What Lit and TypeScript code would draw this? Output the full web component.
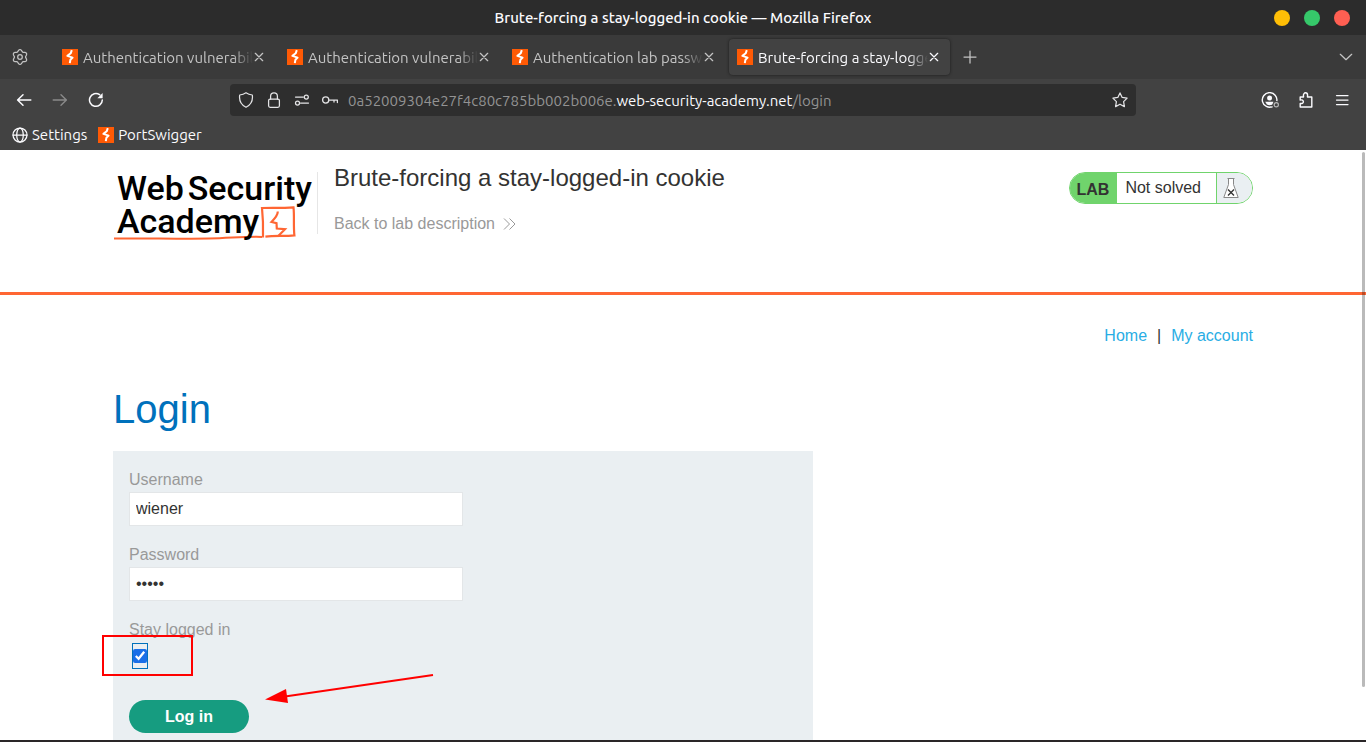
import { LitElement, html, svg, css } from "lit";
import { customElement, property, state } from "lit/decorators.js";
import { classMap } from "lit/directives/class-map.js";

const bolt = svg`
  <rect width="16" height="16" fill="#ff5a05"></rect>
  <path d="M9.800 1.200 8.700 4.300 5.400 6.900l5.200 1.700-2.200 2.200-.6 3.400" fill="none" stroke="#fff" stroke-width="2" stroke-linejoin="round"></path>`;

const favicon = () => html`<svg class="ico" width="16" height="16" viewBox="0 0 16 16" aria-hidden="true">${bolt}</svg>`;

// Six rounded teeth around a circle, one of them pointing up.
const gearOutline = Array.from({ length: 60 }, (_, i) => {
  const angle = (i / 60) * Math.PI * 2;
  const radius = 6.5 + Math.cos(angle * 6) * 0.95;
  return `${(8 + Math.sin(angle) * radius).toFixed(2)},${(8 - Math.cos(angle) * radius).toFixed(2)}`;
}).join(" ");

const line = (content: unknown, size = 16) => html`<svg
  class="ico" width=${size} height=${size} viewBox="0 0 16 16" fill="none" stroke="currentColor"
  stroke-width="1.25" stroke-linecap="round" stroke-linejoin="round" aria-hidden="true">${content}</svg>`;

const icons = {
  gear: svg`<polygon points=${gearOutline}></polygon><circle cx="8" cy="8" r="2.300"></circle>`,
  back: svg`<path d="M14.800 8H1.800M7 2.800 1.600 8 7 13.200" stroke-width="1.500"></path>`,
  forward: svg`<path d="M1.200 8h13M9 2.800 14.400 8 9 13.200" stroke-width="1.400"></path>`,
  reload: svg`<path d="M14.300 8A6.400 6.400 0 1 1 11.600 2.700" stroke-width="1.500"></path><path d="M14.600 1v5.200H9.400z" fill="currentColor" stroke="none"></path>`,
  shield: svg`<path d="M8 .8c1.800 1.300 3.800 2 6.300 2.200.7 5-1.500 10-6.300 12.300C3.200 13 1 8 1.700 3 4.200 2.800 6.200 2.100 8 .8z"></path>`,
  lock: svg`<rect x="2.600" y="7" width="10.800" height="8.300" rx="1.500"></rect><path d="M4.600 7V4.200a3.400 3.400 0 0 1 6.800 0V7"></path>`,
  perms: svg`<path d="M1.500 5h7.800M6.500 11h8"></path><circle cx="12.300" cy="5" r="2"></circle><circle cx="3.500" cy="11" r="2"></circle>`,
  key: svg`<circle cx="3.700" cy="8" r="3.100"></circle><path d="M6.800 8h8.600v2.600M12 8v2"></path>`,
  star: svg`<path d="m8 .9 2.200 4.500 4.900.7-3.500 3.500.8 5L8 12.200l-4.400 2.400.8-5L.9 6.100l4.900-.7z"></path>`,
  globe: svg`<circle cx="8" cy="8" r="7"></circle><ellipse cx="8" cy="8" rx="3.300" ry="7"></ellipse><path d="M1 8h14"></path>`,
  plus: svg`<path d="M8 2v12M2 8h12"></path>`,
  chevron: svg`<path d="m2.300 5.300 5.700 5.400 5.700-5.400"></path>`,
  cross: svg`<path d="m4.300 4.300 7.400 7.400M11.700 4.300l-7.400 7.400"></path>`,
  puzzle: svg`<path d="M2.200 5h3.300c.3-.3-.1-.7-.1-1.600C5.400 2 6.300.8 7.500.8s2.100 1.200 2.100 2.600c0 .9-.4 1.300-.1 1.600h4.300v10H2.200v-3.600c1.600.5 3.200-.2 3.200-1.700s-1.600-2.200-3.200-1.700z" stroke-width="1.400"></path>`,
  menu: svg`<path d="M2.500 3.500h11.500M2.500 8h11.500M2.500 12.500h11.500"></path>`,
};

const shared = css`
  *, *::before, *::after { box-sizing: border-box; }
  .ico { display: block; flex: none; }
  button { border: 0; padding: 0; margin: 0; background: none; color: inherit; font: inherit; cursor: pointer; }
  a { color: inherit; text-decoration: none; }
`;

@customElement("browser-chrome")
class BrowserChrome extends LitElement {
  static styles = [shared, css`
    :host { display: block; flex: none; font: 15px/20px Ubuntu, "Noto Sans", sans-serif; color: #fbfbfe; background: #424242; }
    .title { display: grid; grid-template-columns: 1fr auto 1fr; align-items: center; height: 35px; padding: 0 16px; background: #2c2c2c; font-weight: 500; }
    .title span { grid-column: 2; }
    .lights { display: flex; gap: 14px; justify-self: end; }
    .light { width: 16px; height: 16px; border-radius: 50%; }
    .amber { background: #ffbe06; }
    .green { background: #36c86a; }
    .red { background: #ff5f52; }
    .strip { display: flex; align-items: center; height: 44px; background: #3a3a3a; color: #c4c4c4; }
    .square { display: grid; place-items: center; width: 40px; height: 36px; flex: none; }
    .tabs { display: flex; gap: 4px; padding-left: 14px; min-width: 0; }
    .tab { display: flex; align-items: center; width: 221px; height: 36px; padding: 0 8px; border-radius: 4px; min-width: 80px; }
    .tab.active { background: #424242; color: #fbfbfe; box-shadow: 0 0 3px #1c1c1c; }
    .tab .label { flex: 1; min-width: 0; margin: 0 -2px 0 5px; padding-top: 2px; overflow: hidden; white-space: nowrap; text-align: left;
      -webkit-mask-image: linear-gradient(to left, transparent, #000 20px); mask-image: linear-gradient(to left, transparent, #000 20px); }
    .chevron { margin-left: auto; }
    .bar { display: grid; grid-template-columns: 230px 1fr 230px; align-items: center; height: 42px; }
    .group { display: flex; padding: 0 6px; }
    .group.end { justify-content: flex-end; }
    .tool { display: grid; place-items: center; width: 36px; height: 32px; }
    .tool.off { color: #8a8a8a; }
    .url { display: flex; align-items: center; height: 32px; padding: 0 8px; border-radius: 4px; background: #2e2e2e; gap: 12px; color: #e4e4e6; }
    .address { flex: 1; min-width: 0; margin-left: -2px; padding-top: 2px; overflow: hidden; white-space: nowrap; color: #939393; }
    .host { color: #fbfbfe; }
    .marks { display: flex; gap: 11px; height: 29px; padding: 0 12px 1px; align-items: center; }
    .marks a { display: flex; align-items: center; gap: 4px; }
  `];

  @property({ type: Array }) tabs: string[] = [];
  @state() private current = 3;

  render() {
    return html`
      <div class="title">
        <span>Brute-forcing a stay-logged-in cookie — Mozilla Firefox</span>
        <div class="lights">
          <button class="light amber" aria-label="Minimize"></button>
          <button class="light green" aria-label="Maximize"></button>
          <button class="light red" aria-label="Close window"></button>
        </div>
      </div>
      <div class="strip">
        <button class="square" aria-label="Settings">${line(icons.gear)}</button>
        <div class="tabs" role="tablist">
          ${this.tabs.map((name, i) => html`
            <button class=${classMap({ tab: true, active: i === this.current })} role="tab"
              aria-selected=${i === this.current} @click=${() => (this.current = i)}>
              ${favicon()}<span class="label">${name}</span>${line(icons.cross)}
            </button>`)}
        </div>
        <button class="square" aria-label="New tab">${line(icons.plus)}</button>
        <button class="square chevron" aria-label="List all tabs">${line(icons.chevron)}</button>
      </div>
      <div class="bar">
        <div class="group">
          <button class="tool" aria-label="Back">${line(icons.back)}</button>
          <button class="tool off" aria-label="Forward">${line(icons.forward)}</button>
          <button class="tool" aria-label="Reload">${line(icons.reload)}</button>
        </div>
        <div class="url">
          ${line(icons.shield)}${line(icons.lock)}${line(icons.perms)}${line(icons.key)}
          <div class="address" role="textbox" aria-label="Address">0a52009304e27f4c80c785bb002b006e.<span class="host">web-security-academy.net</span>/login</div>
          <button aria-label="Bookmark this page">${line(icons.star)}</button>
        </div>
        <div class="group end">
          <button class="tool" aria-label="Account">
            <svg class="ico" width="18" height="16" viewBox="0 0 18 16" fill="none" stroke="currentColor" stroke-width="1.400" aria-hidden="true">
              <path d="M15.800 9.200A7.300 7.300 0 1 0 11.600 14.600"></path>
              <circle cx="8.600" cy="6" r="2.500" fill="currentColor" stroke="none"></circle>
              <path d="M4.200 9.800h8.200l-.9 2.400c-1.700 1.400-4.200 1.400-5.800 0z" fill="currentColor" stroke="none"></path>
              <circle cx="15.300" cy="12.800" r="2.100" stroke="#b5b5b5" stroke-width="1.200"></circle>
            </svg>
          </button>
          <button class="tool" aria-label="Extensions">${line(icons.puzzle)}</button>
          <button class="tool" aria-label="Menu">${line(icons.menu)}</button>
        </div>
      </div>
      <nav class="marks" aria-label="Bookmarks">
        <a href="#settings">${line(icons.globe)}Settings</a>
        <a href="#portswigger">${favicon()}PortSwigger</a>
      </nav>`;
  }
}

@customElement("lab-header")
class LabHeader extends LitElement {
  static styles = [shared, css`
    :host { display: block; border-bottom: 3px solid #ff6633; }
    .inner { display: flex; align-items: flex-start; max-width: 1140px; height: 142px; margin: 0 auto; padding-top: 22px; }
    .logo { position: relative; width: 205px; height: 62px; border-right: 1px solid #e6e6e6; flex: none; color: #000;
      font: 500 34px/33px Roboto, sans-serif; white-space: nowrap; }
    .row { display: flex; gap: 4px; padding-left: 4px; }
    .mark { position: absolute; left: 0; top: 32px; z-index: -1; }
    .about { flex: 1; padding-left: 16px; }
    h2 { margin: -8px 0 0; font-size: 24px; line-height: 28px; font-weight: 400; color: #333332; }
    .backlink { display: inline-flex; align-items: center; gap: 8px; margin-top: 22px; line-height: 20px; color: #999999; }
    .status { display: flex; height: 32px; border: 1px solid #70d46c; border-radius: 16px; overflow: hidden; line-height: 30px; color: #333332; }
    .lab { margin: 0; padding: 2px 8px 0 7px; background: #70d46c; font-weight: 700; }
    .state { margin: 0; padding: 0 15px 0 8px; background: #fff; }
    .flask { display: flex; align-items: center; width: 36px; padding-left: 6px; border-left: 1px solid #70d46c; background: #eaeff2; }
  `];

  render() {
    return html`
      <div class="inner">
        <a class="logo" href="#academy" aria-label="Web Security Academy">
          <div class="row"><span>Web</span><span>Security</span></div>
          <div class="row"><span>Academy</span></div>
          <svg class="mark" width="184" height="38" viewBox="0 0 184 38" fill="none" stroke="#ff6633" aria-hidden="true">
            <path d="M1 34.600c22-.7 62 .5 95 0 22-.5 36-2.300 53-1.700" stroke-width="2"></path>
            <path d="M150 33.500c.3-10 .1-19-1-29.500 11-.2 21 .2 31.500-.6 1 9-.2 18 .9 28-10 1-19 .1-29 1.200" stroke-width="2.200"></path>
            <path d="M164.800 7.500c0 3-1 5-6.300 10.500l5 1.200.3 5.300 8.200.7-7 7" stroke-width="2.200"></path>
          </svg>
        </a>
        <div class="about">
          <h2>Brute-forcing a stay-logged-in cookie</h2>
          <a class="backlink" href="#lab">Back to lab description
            <svg class="ico" width="13" height="12" viewBox="0 0 13 12" fill="none" stroke="#999" aria-hidden="true"><path d="m1 .5 5.500 5.500L1 11.500M6.500.5 12 6l-5.500 5.500"></path></svg>
          </a>
        </div>
        <div class="status">
          <p class="lab">LAB</p>
          <p class="state">Not solved</p>
          <span class="flask">
            <svg class="ico" width="16" height="22" viewBox="0 0 16 22" fill="#fff" stroke="#888" aria-hidden="true">
              <path d="M4.500 1.500h7M5.500 1.500v6L.8 20.500h14.400L10.500 7.500v-6"></path>
              <path d="m5 12.500 6 6M11 12.500l-6 6" stroke="#333" stroke-width="1.400"></path>
            </svg>
          </span>
        </div>
      </div>`;
  }
}

@customElement("login-page")
class LoginPage extends LitElement {
  static styles = [shared, css`
    :host { display: block; max-width: 1140px; margin: 0 auto; color: #333332; }
    .links { display: flex; justify-content: flex-end; gap: 10px; padding-top: 30px; line-height: 22px; }
    .links a { color: #29ade4; }
    h1 { margin: 38px 0 18px; font-size: 40px; line-height: 48px; font-weight: 400; color: #0071bc; }
    form { display: flex; flex-direction: column; align-items: flex-start; gap: 16px; max-width: 700px; padding: 16px 16px 40px; background: #eaeff2; }
    .field { display: flex; flex-direction: column; width: 334px; max-width: 100%; }
    label { line-height: 25px; color: #999999; }
    .text { width: 100%; height: 34px; padding: 0 6px; border: 1px solid #e3e6e8; background: #fff; font: inherit; color: #333332; outline: 0; }
    .tick { display: grid; place-items: center; width: 16px; height: 26px; margin: 1px 3px 0; border: 1px solid #0071bc; }
    .tick input { width: 14px; height: 14px; margin: 0; accent-color: #1a6fe8; }
    .submit { width: 120px; height: 33px; margin-top: 15px; border-radius: 17px; background: #169c80; color: #fff; font-weight: 700; }
    .stay { position: relative; }
    .frame { position: absolute; left: -27px; top: 18px; width: 91px; height: 41px; border: 2px solid #ff0000; pointer-events: none; }
    .arrow { position: absolute; left: 136px; top: 56px; pointer-events: none; }
  `];

  render() {
    return html`
      <nav class="links"><a href="#home">Home</a><span>|</span><a href="#account">My account</a></nav>
      <h1>Login</h1>
      <form @submit=${(e: Event) => e.preventDefault()}>
        <div class="field">
          <label for="user">Username</label>
          <input class="text" id="user" type="text" .value=${"wiener"} autocomplete="off">
        </div>
        <div class="field">
          <label for="pass">Password</label>
          <input class="text" id="pass" type="password" .value=${"peter"} autocomplete="off">
        </div>
        <div class="field stay">
          <label for="stay">Stay logged in</label>
          <span class="tick"><input id="stay" type="checkbox" checked></span>
          <span class="frame"></span>
          <svg class="arrow" width="170" height="32" viewBox="0 0 170 32" aria-hidden="true">
            <path d="M168 2 20 23.500" stroke="#f00" stroke-width="2"></path>
            <path d="M0 26.500 21 16l2 14z" fill="#f00"></path>
          </svg>
        </div>
        <button class="submit" type="submit">Log in</button>
      </form>`;
  }
}

@customElement("app-root")
class AppRoot extends LitElement {
  static styles = [shared, css`
    :host { display: flex; flex-direction: column; height: 100vh; overflow: hidden; background: #fff; border-bottom: 2px solid #2a2628; box-sizing: border-box; }
    .view { position: relative; z-index: 0; flex: 1; min-height: 0; overflow: hidden; font: 16px/20px "Liberation Sans", Arial, sans-serif; }
    .thumb { position: absolute; top: 2px; right: 1px; width: 3px; bottom: 53px; border-radius: 2px; background: rgba(0, 0, 0, 0.27); }
  `];

  private tabs = [
    "Authentication vulnerabilities",
    "Authentication vulnerabilities",
    "Authentication lab passwords",
    "Brute-forcing a stay-logged-in cookie",
  ];

  render() {
    return html`
      <browser-chrome .tabs=${this.tabs}></browser-chrome>
      <main class="view">
        <lab-header></lab-header>
        <login-page></login-page>
        <div class="thumb"></div>
      </main>`;
  }
}
